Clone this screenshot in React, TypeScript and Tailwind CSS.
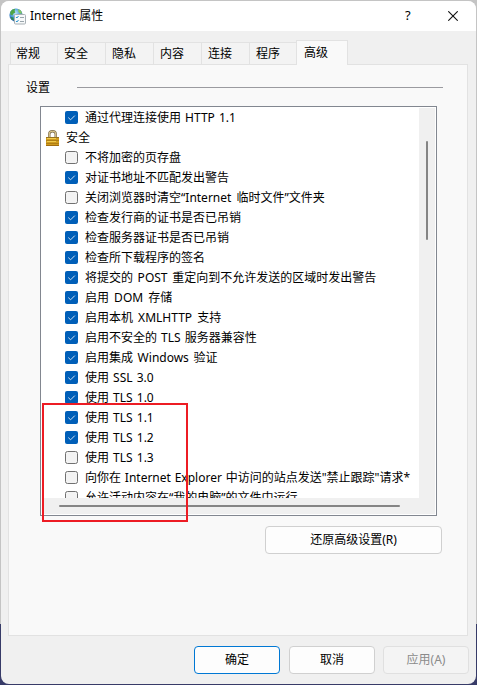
import React from 'react';

type OptionType = { text: string; checked: boolean; spacing?: string };

const tabs: { name: string; size: string }[] = [
  { name: '常规', size: 'w-[47px] pl-[5px]' },
  { name: '安全', size: 'w-[48px] pl-[6px]' },
  { name: '隐私', size: 'w-[48px] pl-[6px]' },
  { name: '内容', size: 'w-[48px] pl-[6px]' },
  { name: '连接', size: 'w-[48px] pl-[6px]' },
  { name: '程序', size: 'w-[47px] pl-[6px]' },
];

const securityOptions: OptionType[] = [
  { text: '不将加密的页存盘', checked: false },
  { text: '对证书地址不匹配发出警告', checked: true },
  { text: '关闭浏览器时清空“Internet 临时文件”文件夹', checked: false, spacing: '[word-spacing:2px]' },
  { text: '检查发行商的证书是否已吊销', checked: true },
  { text: '检查服务器证书是否已吊销', checked: true },
  { text: '检查所下载程序的签名', checked: true },
  { text: '将提交的 POST 重定向到不允许发送的区域时发出警告', checked: true, spacing: '[word-spacing:1.5px]' },
  { text: '启用 DOM 存储', checked: true, spacing: '[word-spacing:2px]' },
  { text: '启用本机 XMLHTTP 支持', checked: true, spacing: '[word-spacing:2px]' },
  { text: '启用不安全的 TLS 服务器兼容性', checked: true },
  { text: '启用集成 Windows 验证', checked: true, spacing: '[word-spacing:1.5px]' },
  { text: '使用 SSL 3.0', checked: true },
  { text: '使用 TLS 1.0', checked: true },
  { text: '使用 TLS 1.1', checked: true },
  { text: '使用 TLS 1.2', checked: true },
  { text: '使用 TLS 1.3', checked: false },
  { text: '向你在 Internet Explorer 中访问的站点发送"禁止跟踪"请求*', checked: false, spacing: '[word-spacing:0.7px]' },
  { text: '允许活动内容在“我的电脑”的文件中运行', checked: false },
];

const InternetIcon = () => (
  <svg width="17" height="17" viewBox="0 0 17 17" className="shrink-0">
    <defs>
      <radialGradient id="globe" cx="0.45" cy="0.35" r="0.7">
        <stop offset="0" stopColor="#c4e8fa" />
        <stop offset="0.5" stopColor="#4f9fda" />
        <stop offset="1" stopColor="#1c4fa0" />
      </radialGradient>
    </defs>
    <circle cx="7" cy="7" r="6.6" fill="url(#globe)" />
    <path d="M1.2 4 L3.4 1.4 L6.2 .8 L5.6 3 L6.4 4.6 L4.2 5.8 L3.4 7.6 L1.4 6.6Z" fill="#4fa544" />
    <path d="M9 1 L11.8 2.6 L13.2 5.4 L11 5.6 L9.4 4Z" fill="#86c95d" />
    <path d="M1.6 9 L4.4 9.4 L4.8 12.6 L2.6 11.4Z" fill="#2e8b4e" />
    <rect x="5.5" y="6.5" width="11" height="9.5" rx="1" fill="#f7f9fa" stroke="#a8b0b5" />
    <path d="M7 9l.9 1 1.6-2M7 13l.9 1 1.6-2" fill="none" stroke="#2792cc" strokeWidth="1" />
    <path d="M11 9.5h4M11 13.5h4" stroke="#9aa5ac" />
  </svg>
);

const LockIcon = () => (
  <svg width="13" height="16" viewBox="0 0 13 16" className="shrink-0">
    <path d="M3.3 8V4.1Q3.3 1.3 6.5 1.3T9.7 4.1V8" fill="none" stroke="#7d6d4e" strokeWidth="2.4" />
    <path d="M3.3 8V4.1Q3.3 1.3 6.5 1.3T9.7 4.1V8" fill="none" stroke="#dcc78c" strokeWidth="1.1" />
    <rect x="0" y="7" width="13" height="9" fill="#cf9a1e" />
    <path d="M0 7.5h13" stroke="#96721f" />
    <path d="M0 10.5h13M0 13.5h13" stroke="#b07f14" />
    <path d="M1 8.5h9M1 11.5h9" stroke="#f0cb4c" />
    <path d="M0 15.5h13" stroke="#a06c10" />
  </svg>
);

const CheckBox = ({ checked }: { checked: boolean }) => (
  <svg width="13" height="13" viewBox="0 0 13 13" className="shrink-0">
    {checked ? (
      <>
        <rect width="13" height="13" rx="2" fill="#005fb8" />
        <path d="M3.3 6.6L5.6 8.8L9.8 4.6" fill="none" stroke="#d0e3f3" strokeWidth="1" />
      </>
    ) : (
      <rect x="0.5" y="0.5" width="12" height="12" rx="2" fill="#f3f3f3" stroke="#707070" />
    )}
  </svg>
);

const OptionRow = ({ item }: { item: OptionType }) => (
  <div className="flex h-5 shrink-0 items-start pl-[23px] pt-[3px]">
    <CheckBox checked={item.checked} />
    <span className={`ml-[7px] leading-[13px] ${item.spacing ? item.spacing : '[word-spacing:1px]'}`}>{item.text}</span>
  </div>
);

const App = () => {
  return (
    <div className="relative h-[685px] w-[477px] overflow-hidden bg-linear-to-b from-[#c4c4c4] from-[624px] to-[#373b68] to-[624px] p-px font-['Noto_Sans','Noto_Sans_CJK_SC',sans-serif] text-[12px] text-black">
      <div className="flex h-[683px] w-[475px] flex-col overflow-hidden rounded-[8px] bg-[#f0f0f0]">
        <header className="flex h-[30px] shrink-0 items-center bg-white pl-2">
          <InternetIcon />
          <h1 className="ml-1 text-[12px]">Internet 属性</h1>
          <span className="ml-auto w-[6px] text-[13px]">?</span>
          <svg width="10" height="10" viewBox="0 0 10 10" className="ml-[37px] mr-[18px]">
            <path d="M.3.3l9.4 9.4M9.7.3L.3 9.7" stroke="#111" strokeWidth="1.1" />
          </svg>
        </header>

        <nav className="flex h-[33px] shrink-0 items-end pl-[9px]">
          {tabs.map((tab) => (
            <div key={tab.name} className={`flex h-[22px] items-center border-l border-t border-[#e2e2e2] bg-[#f3f3f3] ${tab.size}`}>
              {tab.name}
            </div>
          ))}
          <div className="z-10 -mb-px flex h-[25px] w-[52px] items-center border border-b-0 border-[#e2e2e2] bg-[#f9f9f9] pb-px pl-[7px]">高级</div>
        </nav>

        <main className="ml-[7px] flex h-[572px] w-[460px] shrink-0 flex-col border border-[#e2e2e2] bg-[#f9f9f9]">
          <div className="mt-[14px] flex h-[18px] items-center pl-[17px]">
            <span>设置</span>
            <div className="mb-px ml-[27px] h-px w-[366px] bg-[#9b9ba0]"></div>
          </div>

          <section className="ml-[31px] mt-[9px] flex h-[410px] w-[397px] shrink-0 flex-col border border-[#828790] bg-white p-px">
            <div className="flex h-[390px] shrink-0">
              <div className="flex w-[377px] flex-col overflow-hidden whitespace-nowrap">
                <OptionRow item={{ text: '通过代理连接使用 HTTP 1.1', checked: true }} />
                <div className="flex h-5 shrink-0 items-center pl-1">
                  <LockIcon />
                  <span className="ml-[7px]">安全</span>
                </div>
                {securityOptions.map((item) => (
                  <OptionRow key={item.text} item={item} />
                ))}
              </div>
              <div className="w-4 bg-[#f0f0f0] pl-[7px] pt-[33px]">
                <div className="h-[99px] w-0.5 rounded-full bg-[#858585]"></div>
              </div>
            </div>
            <div className="h-4 bg-[#f0f0f0] pl-[17px] pt-[7px]">
              <div className="h-0.5 w-[341px] rounded-full bg-[#858585]"></div>
            </div>
          </section>

          <button className="ml-[256px] mt-[10px] h-[28px] w-[177px] rounded-[4px] border border-[#d0d0d0] bg-[#fdfdfd]">还原高级设置(R)</button>
        </main>

        <footer className="mt-[10px] flex pl-[193px]">
          <button className="h-[28px] w-[86px] rounded-[4px] border border-[#0078d4] bg-[#fdfdfd]">确定</button>
          <button className="ml-[9px] h-[28px] w-[86px] rounded-[4px] border border-[#d0d0d0] bg-[#fdfdfd]">取消</button>
          <button className="ml-2 h-[28px] w-[86px] rounded-[4px] border border-[#e0e0e0] bg-[#f4f4f4] text-[#8b8b8b]">应用(A)</button>
        </footer>
      </div>

      {/* highlight over the TLS options */}
      <div className="absolute left-[42px] top-[403px] z-20 h-[119px] w-[146px] border-2 border-[#ed1c24]"></div>
    </div>
  );
};

export default App;
